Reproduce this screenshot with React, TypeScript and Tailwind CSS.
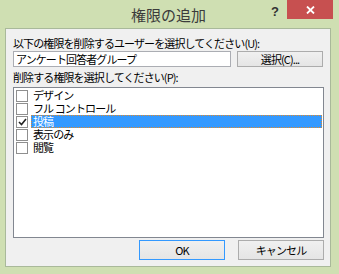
import React from 'react';

const items = [
  { label: 'デザイン', checked: false },
  { label: 'フル コントロール', checked: false },
  { label: '投稿', checked: true, selected: true },
  { label: '表示のみ', checked: false },
  { label: '閲覧', checked: false },
];

function CheckBox({ checked }: { checked: boolean }) {
  return (
    <div className="w-[12px] h-[12px] border border-[#8f8f8f] bg-white flex items-center justify-center shrink-0">
      {checked && (
        <svg width="9" height="8" viewBox="0 0 9 8">
          <path d="M1 4 L3.5 6.5 L8 1" stroke="#222" strokeWidth="1.6" fill="none" />
        </svg>
      )}
    </div>
  );
}

export default function App() {
  return (
    <div
      className="w-[339px] h-[274px] bg-[#cfdfb2] flex flex-col text-[#000] overflow-hidden"
      style={{ fontFamily: '"Noto Sans CJK JP", "Noto Sans", sans-serif' }}
    >
      {/* title bar */}
      <div className="h-[28px] relative flex items-center justify-center shrink-0">
        <span className="text-[15px] text-[#3b3b3b] leading-none ml-[-2px]">権限の追加</span>
        <span className="absolute left-[271px] top-[5px] text-[13px] font-bold text-[#333] leading-none" style={{ fontFamily: '"Liberation Sans", sans-serif' }}>?</span>
        <div className="absolute left-[287px] top-0 w-[46px] h-[19px] bg-[#c75050] flex items-center justify-center">
          <svg width="9" height="8" viewBox="0 0 9 8">
            <path d="M1 0.5 L8 7.5 M8 0.5 L1 7.5" stroke="#fff" strokeWidth="1.8" />
          </svg>
        </div>
      </div>

      {/* client area */}
      <div className="ml-[5px] mr-[8px] mb-[7px] flex-1 bg-[#f0f0f0] border border-[#a9b99a] flex flex-col px-[7px] pt-[6px] text-[11px] leading-none tracking-[-0.9px]">
        <div className="h-[16px] flex items-center">以下の権限を削除するユーザーを選択してください(U):</div>
        <div className="flex gap-[6px] h-[16px]">
          <div className="w-[218px] border border-[#abadb3] bg-white flex items-center px-[2px]">アンケート回答者グループ</div>
          <div className="w-[86px] border border-[#acacac] bg-gradient-to-b from-[#f0f0f0] to-[#e5e5e5] flex items-center justify-center">選択(C)...</div>
        </div>
        <div className="h-[15px] flex items-center mt-[3px]">削除する権限を選択してください(P):</div>
        <div className="mt-[2px] w-[311px] h-[151px] border border-[#828790] bg-white flex flex-col pt-[1px] pl-[2px] pr-[1px]">
          {items.map((it) => (
            <div key={it.label} className="h-[13px] flex items-center">
              <CheckBox checked={it.checked} />
              <div
                className={
                  it.selected
                    ? 'flex-1 h-[13px] ml-[3px] bg-[#3399ff] text-white border border-dotted border-[#e08a2c] flex items-center pl-[1px] leading-[11px]'
                    : 'flex-1 h-[13px] ml-[3px] flex items-center pl-[2px] leading-[11px]'
                }
              >
                {it.label}
              </div>
            </div>
          ))}
        </div>
        <div className="flex justify-end gap-[13px] mt-[2px] mr-[-1px]">
          <div className="w-[86px] h-[20px] border border-[#3399ff] bg-gradient-to-b from-[#f0f0f0] to-[#e5e5e5] flex items-center justify-center">OK</div>
          <div className="w-[86px] h-[20px] border border-[#acacac] bg-gradient-to-b from-[#f0f0f0] to-[#e5e5e5] flex items-center justify-center">キャンセル</div>
        </div>
      </div>
    </div>
  );
}
